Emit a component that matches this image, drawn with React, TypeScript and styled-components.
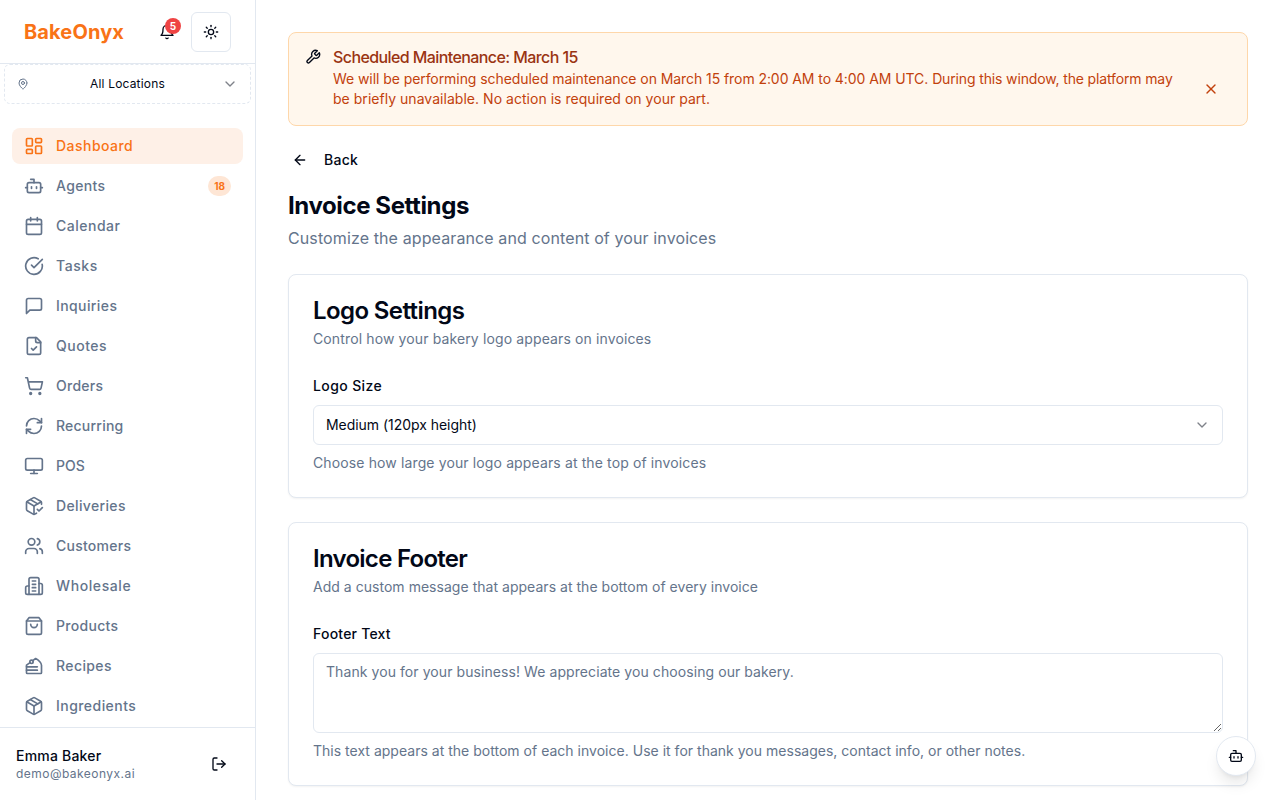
import React from "react";
import styled, { createGlobalStyle } from "styled-components";
import {
  ArrowLeft,
  Bot,
  Calendar,
  ChevronDown,
  CircleCheckBig,
  LayoutDashboard,
  LogOut,
  MapPin,
  Monitor,
  Package,
  PackageCheck,
  RefreshCw,
  ShoppingCart,
  Sun,
  Users,
  X,
} from "lucide-react";

const GlobalStyle = createGlobalStyle`
  *, *::before, *::after { box-sizing: border-box; }
  html, body { margin: 0; padding: 0; overflow: hidden; }
  body {
    background: #fff;
    color: #020817;
    font-family: Inter, "Liberation Sans", sans-serif;
    font-size: 16px;
    line-height: 24px;
  }
  h1, h3, h5, p { margin: 0; }
  button { font: inherit; color: inherit; background: none; border: 0; padding: 0; cursor: pointer; }
  svg { display: block; flex-shrink: 0; }
`;

const Shell = styled.div`
  display: flex;
  height: 100vh;
  overflow: hidden;
`;

const Sidebar = styled.aside`
  display: flex;
  flex-direction: column;
  width: 256px;
  flex-shrink: 0;
  border-right: 1px solid #e2e8f0;
`;

const SidebarHeader = styled.div`
  display: flex;
  align-items: center;
  justify-content: space-between;
  height: 64px;
  flex-shrink: 0;
  padding: 0 24px;
  border-bottom: 1px solid #e2e8f0;
`;

const Brand = styled.span`
  font-size: 20px;
  line-height: 28px;
  font-weight: 700;
  letter-spacing: 0.12px;
  color: #f97316;
`;

const HeaderActions = styled.div`
  display: flex;
  align-items: center;
  gap: 4px;
`;

const IconButton = styled.button<{ $outlined?: boolean }>`
  position: relative;
  display: flex;
  align-items: center;
  justify-content: center;
  width: 40px;
  height: 40px;
  border-radius: 6px;
  border: ${(p) => (p.$outlined ? "1px solid #e2e8f0" : "0")};
`;

const AlertCount = styled.span`
  position: absolute;
  top: 6px;
  right: 6px;
  width: 16px;
  height: 16px;
  border-radius: 50%;
  background: #ef4444;
  color: #fff;
  font-size: 10px;
  line-height: 16px;
  font-weight: 700;
  text-align: center;
`;

const LocationPicker = styled.button`
  display: flex;
  align-items: center;
  justify-content: space-between;
  height: 40px;
  flex-shrink: 0;
  margin: 0 4px;
  padding: 0 12px;
  border: 1px dashed #e2e8f0;
  border-radius: 6px;
  font-size: 12px;
  line-height: 16px;
  letter-spacing: 0.18px;

  svg:first-child { margin-right: 4px; color: #64748b; }
  svg:last-child { opacity: 0.5; }
`;

const Nav = styled.nav`
  display: flex;
  flex-direction: column;
  flex: 1;
  min-height: 0;
  gap: 4px;
  overflow: hidden;
  padding: 24px 12px 0;
`;

const NavItem = styled.a<{ $active?: boolean; $tracking?: number }>`
  display: flex;
  align-items: center;
  gap: 12px;
  height: 36px;
  flex-shrink: 0;
  padding: 0 12px;
  border-radius: 8px;
  font-size: 14px;
  line-height: 20px;
  font-weight: 500;
  letter-spacing: ${(p) => p.$tracking ?? 0.35}px;
  color: ${(p) => (p.$active ? "#f97316" : "#64748b")};
  background: ${(p) => (p.$active ? "#fef0e7" : "transparent")};
`;

const NavBadge = styled.span`
  display: flex;
  align-items: center;
  justify-content: center;
  min-width: 20px;
  height: 20px;
  margin-left: auto;
  padding: 0 6px;
  border-radius: 10px;
  background: #fee6d5;
  color: #f97316;
  font-size: 10px;
  font-weight: 700;
  letter-spacing: 0;
`;

const UserBar = styled.div`
  display: flex;
  align-items: center;
  justify-content: space-between;
  height: 73px;
  flex-shrink: 0;
  padding: 0 16px;
  border-top: 1px solid #e2e8f0;
`;

const UserName = styled.p`
  font-size: 14px;
  line-height: 20px;
  font-weight: 500;
  letter-spacing: 0.2px;
`;

const UserEmail = styled.p`
  font-size: 12px;
  line-height: 16px;
  letter-spacing: 0.46px;
  color: #64748b;
`;

const Main = styled.main`
  flex: 1;
  min-width: 0;
  padding: 32px;
  overflow: hidden;
`;

const Alert = styled.div`
  display: flex;
  gap: 12px;
  padding: 16px;
  border: 1px solid #fed7aa;
  border-radius: 8px;
  background: #fff7ed;
`;

const AlertBody = styled.div`
  flex: 1;
`;

const AlertTitle = styled.h5`
  margin-bottom: 4px;
  font-size: 16px;
  line-height: 16px;
  font-weight: 500;
  letter-spacing: -0.59px;
  color: #9a3412;
`;

const AlertText = styled.div`
  display: flex;
  align-items: center;
  justify-content: space-between;
  font-size: 14px;
  line-height: 20px;
  color: #c2410c;
`;

const Phrase = styled.span<{ $tracking: number }>`
  letter-spacing: ${(p) => p.$tracking}px;
`;

const DismissButton = styled.button`
  display: flex;
  align-items: center;
  justify-content: center;
  width: 40px;
  height: 32px;
  flex-shrink: 0;
`;

const BackButton = styled.button`
  display: flex;
  align-items: center;
  gap: 16px;
  height: 20px;
  margin: 24px 0 20px;
  padding-left: 4px;
  font-size: 14px;
  line-height: 20px;
  font-weight: 500;
  letter-spacing: 0.25px;
`;

const PageTitle = styled.h1`
  font-size: 24px;
  line-height: 32px;
  font-weight: 700;
  letter-spacing: -0.4px;
`;

const PageSubtitle = styled.p`
  margin: 4px 0 24px;
  letter-spacing: 0.11px;
  color: #64748b;
`;

const Card = styled.section`
  margin-bottom: 24px;
  padding: 24px;
  border: 1px solid #e2e8f0;
  border-radius: 8px;
  background: #fff;
  box-shadow: 0 1px 2px rgba(0, 0, 0, 0.05);
`;

const CardTitle = styled.h3<{ $tracking?: number }>`
  font-size: 24px;
  line-height: 24px;
  font-weight: 600;
  letter-spacing: ${(p) => p.$tracking ?? -0.6}px;
`;

const CardDescription = styled.p<{ $tracking?: number }>`
  margin: 6px 0 24px;
  font-size: 14px;
  line-height: 20px;
  letter-spacing: ${(p) => p.$tracking ?? 0}px;
  color: #64748b;
`;

const FieldLabel = styled.label<{ $tracking?: number }>`
  display: block;
  margin-bottom: 6px;
  font-size: 14px;
  line-height: 26px;
  font-weight: 500;
  letter-spacing: ${(p) => p.$tracking ?? 0}px;
`;

const SelectTrigger = styled.button`
  display: flex;
  align-items: center;
  justify-content: space-between;
  width: 100%;
  height: 40px;
  padding: 0 12px;
  border: 1px solid #e2e8f0;
  border-radius: 6px;
  font-size: 14px;
  line-height: 20px;
  letter-spacing: -0.04px;

  svg { opacity: 0.5; }
`;

const TextArea = styled.textarea`
  display: block;
  width: 100%;
  height: 80px;
  padding: 8px 12px;
  border: 1px solid #e2e8f0;
  border-radius: 6px;
  background: #fff;
  font: inherit;
  font-size: 14px;
  line-height: 20px;
  letter-spacing: 0.075px;
  resize: vertical;

  &::placeholder { color: #64748b; }
`;

const Hint = styled.p<{ $tracking?: number }>`
  margin-top: 8px;
  font-size: 14px;
  line-height: 20px;
  letter-spacing: ${(p) => p.$tracking ?? 0}px;
  color: #64748b;
`;

const AssistantButton = styled.button`
  position: fixed;
  right: 24px;
  bottom: 24px;
  display: flex;
  align-items: center;
  justify-content: center;
  width: 40px;
  height: 40px;
  border: 1px solid #e2e8f0;
  border-radius: 50%;
  background: #fff;
  box-shadow: 0 10px 15px -3px rgba(0, 0, 0, 0.1), 0 4px 6px -4px rgba(0, 0, 0, 0.1);
`;

type IconProps = { size?: number };

const Stroked = ({ size = 24, children }: IconProps & { children: React.ReactNode }) => (
  <svg
    width={size}
    height={size}
    viewBox="0 0 24 24"
    fill="none"
    stroke="currentColor"
    strokeWidth={2}
    strokeLinecap="round"
    strokeLinejoin="round"
  >
    {children}
  </svg>
);

const BellIcon = ({ size }: IconProps) => (
  <Stroked size={size}>
    <path d="M6 8a6 6 0 0 1 12 0c0 7 3 9 3 9H3s3-2 3-9" />
    <path d="M10.3 21a1.94 1.94 0 0 0 3.4 0" />
  </Stroked>
);

const OfficeIcon = ({ size }: IconProps) => (
  <Stroked size={size}>
    <path d="M6 22V4a2 2 0 0 1 2-2h8a2 2 0 0 1 2 2v18Z" />
    <path d="M6 12H4a2 2 0 0 0-2 2v6a2 2 0 0 0 2 2h2" />
    <path d="M18 9h2a2 2 0 0 1 2 2v9a2 2 0 0 1-2 2h-2" />
    <path d="M10 6h4M10 10h4M10 14h4M10 18h4" />
  </Stroked>
);

const QuoteIcon = ({ size }: IconProps) => (
  <Stroked size={size}>
    <path d="M15 2H6a2 2 0 0 0-2 2v16a2 2 0 0 0 2 2h12a2 2 0 0 0 2-2V7Z" />
    <path d="M14 2v4a2 2 0 0 0 2 2h4" />
    <path d="m9 15 2 2 4-4" />
  </Stroked>
);

const WrenchIcon = ({ size }: IconProps) => (
  <Stroked size={size}>
    <path d="M14.7 6.3a1 1 0 0 0 0 1.4l1.6 1.6a1 1 0 0 0 1.4 0l3.77-3.77a6 6 0 0 1-7.94 7.94l-6.91 6.91a2.12 2.12 0 0 1-3-3l6.91-6.91a6 6 0 0 1 7.94-7.94l-3.76 3.76z" />
  </Stroked>
);

const SpeechIcon = ({ size }: IconProps) => (
  <Stroked size={size}>
    <path d="M21 15a2 2 0 0 1-2 2H7l-4 4V5a2 2 0 0 1 2-2h14a2 2 0 0 1 2 2z" />
  </Stroked>
);

const BagIcon = ({ size }: IconProps) => (
  <Stroked size={size}>
    <path d="M6 2 3 6v14a2 2 0 0 0 2 2h14a2 2 0 0 0 2-2V6l-3-4Z" />
    <path d="M3 6h18" />
    <path d="M16 10a4 4 0 0 1-8 0" />
  </Stroked>
);

const CakeIcon = ({ size }: IconProps) => (
  <Stroked size={size}>
    <circle cx="9" cy="7" r="2" />
    <path d="M7.2 7.9 3 11v9c0 .6.4 1 1 1h16c.6 0 1-.4 1-1v-9c0-2-3-6-7-8l-3.6 2.6" />
    <path d="M16 13H3" />
    <path d="M16 17H3" />
  </Stroked>
);

type NavEntry = {
  label: string;
  icon: React.ComponentType<IconProps>;
  badge?: number;
  tracking?: number;
};

const navItems: NavEntry[] = [
  { label: "Dashboard", icon: LayoutDashboard, tracking: 0.47 },
  { label: "Agents", icon: Bot, badge: 18 },
  { label: "Calendar", icon: Calendar, tracking: 0.5 },
  { label: "Tasks", icon: CircleCheckBig, tracking: 0.58 },
  { label: "Inquiries", icon: SpeechIcon, tracking: 0.4 },
  { label: "Quotes", icon: QuoteIcon, tracking: 0.5 },
  { label: "Orders", icon: ShoppingCart, tracking: 0.25 },
  { label: "Recurring", icon: RefreshCw, tracking: 0.23 },
  { label: "POS", icon: Monitor, tracking: 0.05 },
  { label: "Deliveries", icon: PackageCheck },
  { label: "Customers", icon: Users, tracking: 0.25 },
  { label: "Wholesale", icon: OfficeIcon, tracking: 0.6 },
  { label: "Products", icon: BagIcon, tracking: 0.3 },
  { label: "Recipes", icon: CakeIcon, tracking: 0.4 },
  { label: "Ingredients", icon: Package, tracking: 0.45 },
];

export default function App() {
  return (
    <>
      <GlobalStyle />
      <Shell>
        <Sidebar>
          <SidebarHeader>
            <Brand>BakeOnyx</Brand>
            <HeaderActions>
              <IconButton>
                <BellIcon size={16} />
                <AlertCount>5</AlertCount>
              </IconButton>
              <IconButton $outlined>
                <Sun size={16} />
              </IconButton>
            </HeaderActions>
          </SidebarHeader>
          <LocationPicker>
            <MapPin size={12} />
            <span>All Locations</span>
            <ChevronDown size={16} />
          </LocationPicker>
          <Nav>
            {navItems.map(({ label, icon: Icon, badge, tracking }, i) => (
              <NavItem key={label} $active={i === 0} $tracking={tracking}>
                <Icon size={20} />
                {label}
                {badge && <NavBadge>{badge}</NavBadge>}
              </NavItem>
            ))}
          </Nav>
          <UserBar>
            <div>
              <UserName>Emma Baker</UserName>
              <UserEmail>demo@bakeonyx.ai</UserEmail>
            </div>
            <IconButton>
              <LogOut size={16} />
            </IconButton>
          </UserBar>
        </Sidebar>
        <Main>
          <Alert>
            <WrenchIcon size={16} />
            <AlertBody>
              <AlertTitle>Scheduled Maintenance: March 15</AlertTitle>
              <AlertText>
                <span>
                  <Phrase $tracking={-0.07}>
                    We will be performing scheduled maintenance on March 15 from 2:00 AM to 4:00 AM
                    UTC.{" "}
                  </Phrase>
                  <Phrase $tracking={-0.14}>During this window, the platform may </Phrase>
                  <Phrase $tracking={0.03}>
                    be briefly unavailable. No action is required on your part.
                  </Phrase>
                </span>
                <DismissButton>
                  <X size={16} />
                </DismissButton>
              </AlertText>
            </AlertBody>
          </Alert>
          <BackButton>
            <ArrowLeft size={16} />
            Back
          </BackButton>
          <PageTitle>Invoice Settings</PageTitle>
          <PageSubtitle>Customize the appearance and content of your invoices</PageSubtitle>
          <Card>
            <CardTitle>Logo Settings</CardTitle>
            <CardDescription $tracking={0.125}>
              Control how your bakery logo appears on invoices
            </CardDescription>
            <FieldLabel $tracking={0.38}>Logo Size</FieldLabel>
            <SelectTrigger>
              Medium (120px height)
              <ChevronDown size={16} />
            </SelectTrigger>
            <Hint $tracking={0.125}>Choose how large your logo appears at the top of invoices</Hint>
          </Card>
          <Card>
            <CardTitle $tracking={-0.72}>Invoice Footer</CardTitle>
            <CardDescription $tracking={0.03}>
              Add a custom message that appears at the bottom of every invoice
            </CardDescription>
            <FieldLabel $tracking={0.22}>Footer Text</FieldLabel>
            <TextArea placeholder="Thank you for your business! We appreciate you choosing our bakery." />
            <Hint $tracking={0.015}>
              This text appears at the bottom of each invoice. Use it for thank you messages,
              contact info, or other notes.
            </Hint>
          </Card>
        </Main>
      </Shell>
      <AssistantButton>
        <Bot size={16} />
      </AssistantButton>
    </>
  );
}
